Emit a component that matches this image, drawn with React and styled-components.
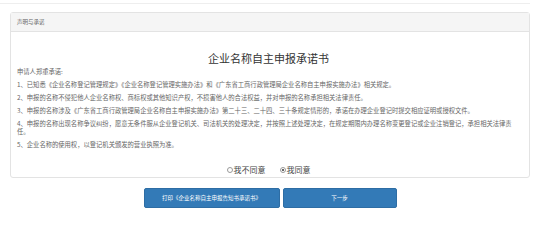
import React, { useState } from 'react';
import styled, { createGlobalStyle } from 'styled-components';

const GlobalStyle = createGlobalStyle`
  html, body {
    margin: 0;
    padding: 0;
    background: #fff;
    font-family: "Noto Sans CJK SC", "Liberation Sans", sans-serif;
    color: #333;
  }
`

const Page = styled.div`
  width: 554px;
  height: 234px;
  overflow: hidden;
`

const TopRule = styled.div`
  width: 530px;
  height: 3px;
  border-bottom: 1px solid #eeeeee;
`

const Panel = styled.div`
  width: 518px;
  margin: 8px 0 0 10px;
  border: 1px solid #e3e3e3;
  border-radius: 3px;
  background: #fff;
`

const PanelHeader = styled.div`
  height: 18px;
  line-height: 18px;
  padding-left: 6px;
  background: #f5f5f5;
  border-bottom: 1px solid #e3e3e3;
  font-size: 5.5px;
  color: #666;
`

const PanelBody = styled.div`
  padding: 19px 9px 2px 6px;
`

const Title = styled.h1`
  margin: 0;
  font-size: 11px;
  line-height: 14px;
  font-weight: normal;
  text-align: center;
  color: #333;
`

const Terms = styled.div`
  margin-top: 3px;
`

const Para = styled.p`
  margin: 0 0 4.4px;
  font-size: 6.3px;
  line-height: 8.5px;
  color: #666;
`

const Choices = styled.div`
  display: flex;
  justify-content: center;
  gap: 14px;
  margin-top: 16px;
`

const Choice = styled.label`
  display: flex;
  align-items: center;
  gap: 1px;
  font-size: 8px;
  line-height: 10px;
  color: #444;
  cursor: pointer;
`

const RadioDot = styled.span`
  width: 4px;
  height: 4px;
  border: 1px solid #999;
  border-radius: 50%;
  position: relative;
  background: #fff;

  &::after {
    content: '';
    display: ${p => (p.$checked ? 'block' : 'none')};
    position: absolute;
    left: 1px;
    top: 1px;
    width: 2px;
    height: 2px;
    border-radius: 50%;
    background: #333;
  }
`

const Actions = styled.div`
  display: flex;
  justify-content: center;
  gap: 3px;
  margin: 9.5px 0 0 10px;
  width: 520px;
`

const Button = styled.button`
  width: ${p => p.$w}px;
  height: 20px;
  padding: 0;
  border: 1px solid #2e6da4;
  border-radius: 2px;
  background: #337ab7;
  color: #fff;
  font-family: inherit;
  font-size: 5.5px;
  cursor: pointer;
`

const terms = [
  '申请人郑重承诺:',
  '1、已知悉《企业名称登记管理规定》《企业名称登记管理实施办法》和《广东省工商行政管理局企业名称自主申报实施办法》相关规定。',
  '2、申报的名称不侵犯他人企业名称权、商标权或其他知识产权，不损害他人的合法权益，并对申报的名称承担相关法律责任。',
  '3、申报的名称涉及《广东省工商行政管理局企业名称自主申报实施办法》第二十三、二十四、三十条规定情形的，承诺在办理企业登记时提交相应证明或授权文件。',
  '4、申报的名称出现名称争议纠纷，愿意无条件服从企业登记机关、司法机关的处理决定，并按照上述处理决定，在规定期限内办理名称变更登记或企业注销登记，承担相关法律责任。',
  '5、企业名称的使用权，以登记机关颁发的营业执照为准。',
]

export default function App() {
  const [agree, setAgree] = useState(true)

  return (
    <Page>
      <GlobalStyle />
      <TopRule />
      <Panel>
        <PanelHeader>声明与承诺</PanelHeader>
        <PanelBody>
          <Title>企业名称自主申报承诺书</Title>
          <Terms>
            {terms.map(t => (
              <Para key={t}>{t}</Para>
            ))}
          </Terms>
          <Choices>
            <Choice onClick={() => setAgree(false)}>
              <RadioDot $checked={!agree} />我不同意
            </Choice>
            <Choice onClick={() => setAgree(true)}>
              <RadioDot $checked={agree} />我同意
            </Choice>
          </Choices>
        </PanelBody>
      </Panel>
      <Actions>
        <Button $w={136}>打印《企业名称自主申报告知书承诺书》</Button>
        <Button $w={114}>下一步</Button>
      </Actions>
    </Page>
  )
}
